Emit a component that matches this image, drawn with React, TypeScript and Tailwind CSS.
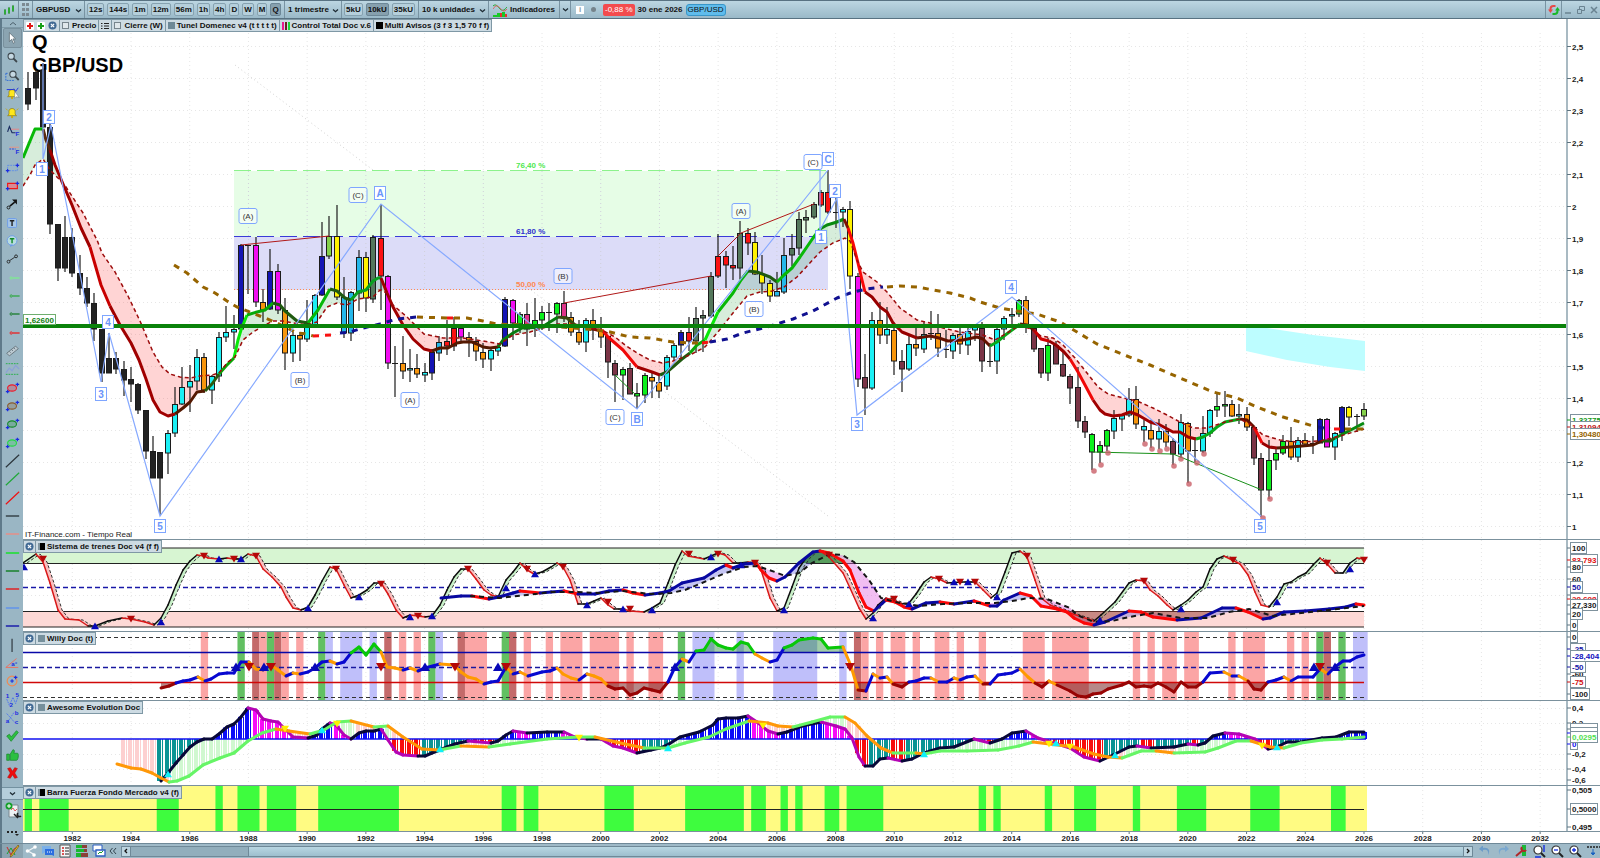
import { Fragment } from "react";
import type { ReactNode } from "react";

type Point = [number, number];

const FIRST_X = 28.3;
const QUARTER = 7.339;
const LAST_X = 1364;
const AXIS_X = 1567;

const quarterX = (i: number) => FIRST_X + i * QUARTER;
const yearX = (year: number) => 72.3 + (year - 1982) * 29.357;

function parse(s: string): Point[] {
  return s
    .trim()
    .split(/\s+/)
    .map((p) => p.split(",").map(Number) as Point);
}

function join(points: Point[]) {
  return points.map((p) => p.join(",")).join(" ");
}

function valueAt(points: Point[], x: number) {
  if (x <= points[0][0]) return points[0][1];
  for (let i = 1; i < points.length; i++) {
    const [x0, y0] = points[i - 1];
    const [x1, y1] = points[i];
    if (x <= x1) return y0 + ((y1 - y0) * (x - x0)) / (x1 - x0 || 1);
  }
  return points[points.length - 1][1];
}

const CANDLE_COLORS: Record<string, string> = {
  k: "#222222",
  C: "#1cf0f5",
  O: "#f7950c",
  B: "#1414b4",
  M: "#f20df2",
  G: "#84d04a",
  Y: "#fff200",
  S: "#25b7ea",
  D: "#54785c",
  R: "#fb1212",
  L: "#0cf01c",
  P: "#e0358a",
  W: "#7b3446",
};

// one candle per quarter: high, body top, body bottom, low, color key
const CANDLES = `
72,88,104,110,k 70,72,88,100,k 63,70,127,128,k 124,127,224,234,k 224,224,268,281,k 216,237,268,272,k
228,237,273,277,k 255,273,288,295,k 277,288,303,307,k 293,303,329,341,k 329,329,373,382,k 333,358,373,373,k
352,358,369,374,k 361,369,380,396,k 367,379,384,402,k 383,384,410,414,k 410,410,451,459,k 436,451,478,478,k
452,452,478,515,k 430,433,453,474,C 387,404,433,437,C 367,387,404,405,C 365,381,387,412,C 349,357,381,390,C
353,357,390,393,O 375,376,390,404,C 332,337,376,382,C 306,332,337,342,C 315,329,332,349,C 244,245,329,330,B
245,245,245,294,k 237,245,302,307,M 289,302,310,322,O 249,271,309,310,B 264,271,310,314,M 298,310,353,370,O
332,335,353,362,C 332,335,339,361,O 300,323,339,342,C 294,295,326,327,C 222,256,295,296,B 216,236,256,259,G
205,236,297,300,Y 277,297,333,338,S 291,292,333,341,S 250,257,293,311,S 252,257,298,312,Y 235,237,299,303,D
204,238,276,310,R 275,276,363,369,M 346,363,363,397,k 336,363,371,379,O 349,368,370,382,C 354,368,374,378,O
363,372,375,382,C 349,352,373,380,B 336,342,353,361,S 320,341,346,355,R 317,328,346,351,R 326,328,337,341,M
332,337,340,357,O 337,341,351,361,O 343,352,359,368,O 347,350,359,371,C 343,347,351,356,C 297,299,346,347,B
299,300,323,340,M 312,314,324,333,L 303,314,329,346,P 298,320,328,337,L 306,312,320,330,L 303,312,313,331,P
302,303,314,333,L 291,303,317,322,P 312,317,332,336,O 320,332,342,345,O 318,320,342,352,C 309,320,330,340,O
317,331,337,348,O 336,336,362,378,W 360,363,375,402,W 367,369,375,400,L 363,368,394,394,W 383,393,396,409,L
373,375,395,403,L 372,377,381,398,O 375,382,391,398,O 355,357,386,390,C 343,345,357,360,C 330,332,345,361,B
317,332,341,351,R 307,318,341,353,D 310,315,318,352,D 272,276,316,318,D 234,256,276,278,R 251,256,265,288,R
246,265,268,280,R 221,233,268,279,D 228,233,243,255,R 232,242,274,275,Y 255,274,283,294,Y 280,283,296,302,Y
272,291,296,296,S 238,255,292,294,S 234,248,255,266,D 212,219,248,255,D 210,217,220,233,D 202,204,217,219,D
190,192,205,207,R 170,192,212,214,R 195,212,212,228,k 207,209,212,227,C 201,209,276,289,Y 273,276,379,387,M
354,377,388,415,W 312,320,388,390,C 302,320,335,344,O 307,329,335,344,C 322,330,361,375,O 350,361,369,392,W
336,344,369,371,C 327,344,348,356,O 322,334,349,353,C 311,333,333,340,k 314,333,348,357,O 330,349,349,358,k
333,335,351,359,C 327,334,344,354,O 328,331,345,355,C 325,326,330,341,C 322,328,361,372,W 343,361,361,367,k
328,329,361,374,C 316,318,329,340,C 308,314,316,325,C 299,300,314,317,L 296,300,325,333,O 325,328,349,352,W
348,348,373,378,W 338,345,373,381,L 341,345,364,364,W 351,364,376,377,W 374,376,388,404,W 367,387,421,428,W
416,421,432,438,W 433,434,452,470,L 441,445,452,463,L 429,430,446,451,L 410,418,431,439,C 414,415,419,431,C
388,399,415,417,C 386,399,424,429,O 420,426,430,442,C 420,430,439,448,O 419,431,439,449,C 424,431,442,447,O
438,441,454,465,W 414,422,454,458,C 422,423,451,483,O 437,450,450,462,k 416,433,451,453,C 409,410,433,437,C
392,406,410,417,L 391,404,406,417,L 400,404,416,417,O 404,414,416,424,C 407,414,427,431,O 426,427,458,465,W
453,458,490,517,W 440,460,490,499,L 448,453,460,470,L 435,441,453,455,L 427,441,457,460,O 437,440,457,462,C
433,440,444,445,O 436,443,443,454,k 418,419,443,443,B 418,419,447,447,M 432,433,447,460,C 406,407,433,441,B
406,407,417,426,Y 414,416,416,432,k 403,409,416,420,G`
  .trim()
  .split(/\s+/)
  .map((c) => {
    const [high, top, bottom, low, key] = c.split(",");
    return { high: +high, top: +top, bottom: +bottom, low: +low, key };
  });

const TREND_RUNS: [string, string][] = [
  ["#08b808", "23,158 35,129 43,129"],
  ["#5a2a10", "43,129 46,140 50,150"],
  ["#a00000", "50,150 55,165 63,184 72,205 81,228 90,247"],
  ["#c80000", "90,247 101,285 110,306"],
  ["#a00000", "110,306 120,325 131,343 139,360 146,379 153,400 160,412 168,416 175,414"],
  ["#541800", "175,414 183,408 190,402 197,392 205,391"],
  ["#2c5a10", "205,391 212,384 219,374"],
  ["#07a807", "219,374 226,366 234,358"],
  ["#08e808", "234,358 238,340 241,330 247,315"],
  ["#08a808", "247,315 257,312 265,310 273,303"],
  ["#1f5a10", "273,303 280,305 285,311 297,321 308,323"],
  ["#08b808", "308,323 318,310 330,289"],
  ["#1f5a10", "330,289 337,291 345,298 351,300"],
  ["#08a020", "351,300 358,292 366,290 373,281 378,278 381,278"],
  ["#a00000", "381,278 387,293 393,307 403,325 413,339 424,349 432,351"],
  ["#541800", "432,351 440,348 448,348 457,343 463,342 472,342 477,344 483,347 490,348 498,347"],
  ["#087a10", "498,347 503,340 513,333 522,328 542,327 550,322 558,317"],
  ["#3a4a10", "558,317 567,318 575,325"],
  ["#801000", "575,325 587,327 597,330 602,330"],
  ["#f00808", "602,330 608,337 623,350 637,367"],
  ["#a00000", "637,367 652,372 660,375"],
  ["#1f5a10", "660,375 667,372 682,359 690,353"],
  ["#08a808", "690,353 697,345 705,340"],
  ["#08e808", "705,340 711,327 718,312"],
  ["#08b808", "718,312 733,293 741,280 748,271"],
  ["#1f5a10", "748,271 757,272 770,277 777,282"],
  ["#08b808", "777,282 784,275 792,268 800,257 813,238 820,229"],
  ["#088a10", "820,229 827,225 837,222 844,219"],
  ["#801000", "844,219 848,228"],
  ["#f80808", "848,228 853,243 858,263 862,280 865,292"],
  ["#980000", "865,292 872,297 880,307 887,312 893,323 902,332 917,338"],
  ["#641000", "917,338 930,336 939,338 948,341 963,340 977,337 983,339 990,346"],
  ["#08a818", "990,346 997,342 1004,336 1012,330 1020,324"],
  ["#541800", "1020,324 1027,325 1034,330"],
  ["#d00000", "1034,330 1041,339 1049,341"],
  ["#980000", "1049,341 1056,345 1064,352 1070,359"],
  ["#f00808", "1070,359 1078,372 1085,385 1093,400"],
  ["#a00000", "1093,400 1100,410 1105,414 1113,416 1122,415 1130,412 1138,415 1150,422 1160,425 1173,432 1180,432 1188,437 1196,439"],
  ["#08a818", "1196,439 1203,437 1210,433 1217,427 1225,422 1240,419"],
  ["#641000", "1240,419 1247,420 1254,427"],
  ["#f00808", "1254,427 1262,443"],
  ["#980000", "1262,443 1269,447 1277,448"],
  ["#541800", "1277,448 1291,447 1313,445 1322,441"],
  ["#1f5a10", "1322,441 1330,441 1335,438"],
  ["#088a10", "1335,438 1343,434 1364,423"],
];

const TREND = TREND_RUNS.flatMap(([, s]) => parse(s));

const SLOW_TREND = parse(`23,186 30,175 35,165 43,159 50,170 58,178 66,187 83,213 97,240 102,253 115,272 128,296 140,321
153,352 162,367 170,374 180,377 190,378 200,376 212,375 219,373 228,362 235,357 243,340 253,332 265,325 273,321 283,321
293,323 307,325 317,322 327,307 337,303 347,305 358,299 373,297 380,290 387,293 393,305 407,317 417,327 424,334 443,338
463,338 483,341 500,344 513,335 530,332 543,328 558,324 570,324 590,328 602,330 615,337 625,345 637,353 650,360 662,363
673,361 690,355 705,347 718,332 733,313 747,296 760,292 772,291 784,287 797,277 808,265 820,252 833,243 845,238 850,241
857,260 863,272 877,282 887,292 900,308 917,320 930,323 943,328 960,332 983,335 995,340 1007,333 1020,325 1033,330
1041,336 1053,338 1063,345 1075,358 1087,373 1098,387 1108,394 1123,398 1137,401 1153,408 1167,415 1180,422 1193,428
1207,428 1225,422 1240,419 1253,426 1263,435 1280,440 1297,442 1320,441 1340,436 1364,429`);

const LONG_AVERAGE: [string, string][] = [
  ["#966400", "174,265 187,273 203,287 215,293 227,301 237,307 265,318 277,323 297,333 307,334 313,336"],
  ["#f81010", "313,336 332,335"],
  ["#101090", "340,333 350,332 363,328 380,324 397,319 417,317"],
  ["#966400", "417,317 447,318"],
  ["#f81010", "447,318 454,318"],
  ["#966400", "454,318 467,318 483,321 497,324 550,326 597,330 610,332 630,337 650,338 673,342 693,343 702,343"],
  ["#f81010", "702,343 710,342"],
  ["#101090", "710,342 727,339 743,333 767,327 793,319 813,311 837,298 853,292 867,289 883,287"],
  ["#966400", "887,287 900,286 917,287 950,293 970,298 980,302 1000,308 1017,311 1037,314 1060,322 1077,332 1097,344 1127,356 1150,365 1180,378 1213,392 1237,398 1257,407 1283,417 1313,426"],
  ["#101090", "1318,427 1330,429"],
  ["#f81010", "1334,429 1341,429"],
  ["#966400", "1345,429 1363,429"],
];

const WAVES = [
  "43,63 43,159 51,125 101,382 109,333 160,516 381,204 637,409 828,170",
  "820,170 820,230 837,198 857,415 1012,297 1262,517",
];

const DIVERGENCES: [string, string][] = [
  ["#b01818", "241,245 329,236"],
  ["#b01818", "564,303 711,276"],
  ["#b01818", "718,256 741,233 814,204"],
  ["#189018", "615,375 637,396"],
  ["#189018", "1093,452 1173,454 1262,490"],
];

const WAVE_LABELS: [string, number, number][] = [
  ["2", 49, 117], ["1", 42, 169], ["4", 108, 322], ["3", 101, 394], ["5", 160, 526],
  ["A", 380, 193], ["C", 828, 159], ["2", 835, 191], ["1", 821, 237], ["B", 637, 419],
  ["3", 857, 424], ["4", 1011, 287], ["5", 1260, 526],
];

const SUBWAVE_LABELS: [string, number, number][] = [
  ["(A)", 248, 216], ["(C)", 358, 195], ["(B)", 300, 380], ["(A)", 410, 400], ["(B)", 563, 276],
  ["(C)", 615, 417], ["(A)", 741, 211], ["(B)", 754, 309], ["(C)", 813, 162],
];

const DOTS = parse(`1094,471 1101,465 1108,453 1145,444 1152,449 1160,451 1167,449 1174,466 1181,459 1189,484 1197,463
1204,454 1270,499 1263,518`);

const TRAIN_FAST = parse(`23,563 36,554 43,562 50,583 58,610 65,619 79,620 88,626 95,626 108,621 122,618 131,619 145,622
154,625 161,618 168,605 176,585 183,570 190,561 197,555 204,556 208,558 219,559 227,558 234,559 241,559 248,554 256,556
263,569 272,577 281,587 286,597 293,608 301,610 308,607 315,595 322,581 330,567 336,569 344,585 351,598 359,595 367,590
374,583 381,583 388,594 396,610 403,618 410,615 418,616 425,617 432,616 440,605 447,590 454,577 461,569 468,569 476,579
484,590 491,595 498,597 506,580 513,572 520,563 527,570 534,574 542,572 551,567 557,563 563,567 570,580 578,604 587,604
594,601 601,598 608,605 614,609 623,609 630,611 644,612 652,608 660,603 668,583 675,565 682,551 688,556 704,559 711,556
718,553 725,555 733,563 740,563 748,562 755,563 761,570 770,598 777,611 784,608 792,587 799,568 806,558 813,552 820,551
829,557 843,573 850,588 859,608 866,619 873,613 878,605 886,598 895,601 902,604 909,603 916,594 924,582 931,577 939,579
947,583 961,582 975,582 983,590 991,598 997,593 1005,572 1012,553 1020,551 1027,557 1035,580 1041,598 1050,605 1070,613
1094,621 1101,615 1115,602 1129,583 1136,580 1144,581 1150,590 1158,596 1167,605 1173,610 1181,605 1188,600 1196,592
1203,587 1210,569 1217,559 1224,556 1232,560 1240,564 1248,575 1255,592 1261,605 1269,607 1277,597 1284,584 1291,582
1298,577 1306,573 1313,565 1320,558 1328,565 1335,573 1343,573 1350,563 1357,558 1364,559`);

const TRAIN_SLOW = parse(`441,598 461,596 472,596 489,599 499,597 513,593 520,591 540,593 551,592 564,591 578,594 595,594
609,591 623,590 633,593 645,595 660,593 669,591 682,583 704,578 716,570 726,565 733,568 744,564 756,563 761,570 769,578
777,581 785,577 799,563 813,552 820,551 829,553 843,561 850,570 859,593 866,607 874,611 886,600 895,602 904,607 912,609
926,603 940,602 954,604 974,601 990,606 997,606 1004,600 1020,593 1031,596 1041,606 1057,609 1067,612 1074,618 1084,623
1094,625 1105,622 1129,611 1141,612 1153,617 1177,620 1201,618 1222,608 1236,608 1248,612 1263,619 1270,618 1284,612
1305,611 1329,609 1346,607 1356,604 1364,605`);

const TRAIN_SIGNAL = parse(`470,596 499,598 527,595 551,592 575,592 599,593 623,591 651,594 671,593 685,590 702,583
723,574 744,567 757,566 775,572 785,576 799,573 812,563 830,554 842,555 854,562 869,580 881,598 895,602 919,606 943,604
967,603 995,603 1012,601 1029,598 1047,599 1070,608 1077,615 1094,622 1112,621 1129,617 1153,613 1181,618 1208,618
1229,612 1249,609 1273,616 1301,613 1329,610 1364,606`);

const TRAIN_DOWN = parse(`43,559 204,556 234,559 256,556 336,569 381,584 131,619 418,616 468,569 527,569 563,567 608,602
630,609 689,554 718,554 755,563 829,555 894,599 939,579 960,582 975,582 1027,556 1144,581 1233,560 1327,563 1364,560`);

const TRAIN_UP = parse(`24,567 95,626 161,622 219,559 241,559 308,608 359,597 410,617 432,616 506,588 535,574 587,605
623,609 652,610 711,557 741,565 784,610 873,618 909,604 954,582 968,582 997,597 1100,620 1181,609 1277,602 1350,569`);

const WILLY = parse(`161,688 169,686 176,683 183,681 190,680 198,677 205,681 211,679 219,674 227,673 234,673 241,662
249,662 256,669 263,670 271,665 278,670 286,676 293,673 300,674 308,672 315,668 322,662 330,661 337,664 344,662 351,653
359,647 366,655 374,644 381,652 387,667 395,668 403,670 410,668 418,671 425,668 440,664 454,665 461,672 468,677 476,679
484,684 491,682 498,681 506,667 513,674 520,672 528,676 542,672 550,671 557,668 563,674 571,678 579,680 587,674 594,676
601,679 608,686 615,689 623,688 630,695 637,693 644,688 652,690 660,692 668,682 675,667 682,659 689,662 696,651 704,650
711,639 718,645 726,648 733,649 741,642 748,644 755,654 762,658 770,662 777,660 784,648 792,645 799,640 813,638 821,639
828,648 843,647 851,666 858,690 866,691 873,674 880,678 887,677 893,684 902,687 909,682 916,681 924,678 931,678 939,682
947,682 954,678 960,680 967,677 975,676 983,684 990,684 998,675 1005,674 1012,673 1020,669 1028,677 1035,683 1042,687
1049,681 1057,685 1070,691 1078,696 1086,697 1093,694 1101,693 1108,689 1122,685 1129,682 1136,687 1144,686 1151,687
1158,683 1166,687 1174,692 1181,682 1188,687 1196,687 1203,682 1210,673 1224,672 1232,676 1239,676 1248,681 1254,689
1261,690 1268,682 1276,680 1284,677 1291,681 1298,677 1313,677 1320,669 1328,674 1335,667 1343,661 1350,661 1357,657
1364,655`);

// first quarter, last quarter, color
const PINK = "#fba5a5";
const GREEN = "#62c062";
const MAROON = "#c46a6a";
const LILAC = "#bfbffa";
const WILLY_BARS: [number, number, string][] = [
  [24, 24, PINK], [29, 29, GREEN], [31, 31, MAROON], [32, 32, PINK], [33, 33, GREEN], [34, 34, MAROON],
  [35, 35, PINK], [37, 37, PINK], [40, 40, GREEN], [41, 41, LILAC], [43, 45, LILAC], [47, 47, LILAC],
  [49, 49, MAROON], [51, 51, PINK], [53, 53, PINK], [55, 55, GREEN], [56, 56, LILAC], [59, 59, MAROON],
  [60, 62, PINK], [65, 65, GREEN], [66, 66, MAROON], [68, 68, PINK], [71, 71, PINK], [73, 75, PINK],
  [77, 80, PINK], [82, 82, PINK], [85, 86, PINK], [89, 89, GREEN], [91, 93, LILAC], [97, 97, LILAC],
  [102, 107, LILAC], [111, 111, LILAC], [113, 113, MAROON], [114, 114, PINK], [116, 116, PINK],
  [118, 119, PINK], [121, 121, PINK], [124, 125, PINK], [127, 127, PINK], [130, 130, PINK],
  [136, 138, PINK], [140, 144, PINK], [151, 151, PINK], [153, 153, PINK], [155, 156, PINK],
  [158, 159, PINK], [164, 164, PINK], [166, 168, PINK], [172, 172, PINK], [174, 174, PINK],
  [176, 176, GREEN], [177, 177, MAROON], [179, 179, GREEN], [181, 182, LILAC],
];

const AWESOME_FAST = parse(`161,781 168,773 176,763 183,755 190,747 197,742 204,739 212,739 219,734 227,727 234,724
241,717 248,708 256,710 263,719 271,721 278,722 286,730 293,737 308,738 317,735 322,729 330,723 336,725 344,735 351,739
359,733 366,731 374,731 381,729 388,740 396,752 403,755 418,756 425,756 432,753 440,750 447,747 455,744 468,741 491,743
498,741 506,735 513,731 527,733 547,732 564,732 575,737 587,739 601,739 613,746 623,748 637,753 651,750 660,748 669,744
680,737 699,732 713,725 718,719 726,718 738,718 748,716 757,722 768,731 778,734 787,732 802,726 821,722 836,726 845,729
852,738 859,757 865,766 873,766 880,759 888,758 902,761 912,759 924,753 940,748 954,747 974,739 990,743 1002,739
1012,733 1026,731 1038,738 1070,748 1084,757 1100,761 1113,755 1129,747 1137,746 1151,748 1174,747 1188,744 1198,745
1205,743 1213,736 1225,733 1239,734 1255,739 1268,749 1277,747 1287,742 1301,742 1322,738 1336,737 1349,732 1364,732`);

const AWESOME_SLOW = parse(`117,764 131,768 141,769 152,773 161,778 169,782 177,781 189,776 203,765 220,758 234,753
248,741 262,733 276,729 289,731 310,734 324,730 337,722 351,721 374,727 388,726 403,737 422,749 439,750 461,746 489,747
510,744 547,739 578,737 595,737 616,742 644,748 668,748 685,743 709,737 726,729 749,721 768,723 778,726 793,727 812,722
830,717 845,717 855,723 867,736 881,748 893,753 916,753 924,754 940,751 967,751 998,750 1019,746 1033,742 1074,747
1094,754 1108,757 1122,758 1141,751 1156,751 1174,753 1205,752 1218,748 1236,741 1251,741 1270,747 1284,748 1301,743
1322,740 1342,739 1364,737`);

const AWESOME_UP = parse("168,774 322,730 440,749 668,748 924,754 1056,743 1115,755 1277,747");
const AWESOME_DOWN = parse("285,729 337,724 579,738 763,726 1049,744 1070,747 1262,746");

const STRENGTH_BARS: [number, number][] = [
  [0, 0], [2, 5], [18, 20], [26, 26], [29, 31], [33, 36], [40, 50], [65, 66], [68, 69], [79, 82],
  [90, 97], [99, 100], [103, 103], [105, 105], [109, 110], [112, 116], [130, 130], [132, 132],
  [139, 139], [143, 145], [151, 151], [157, 160], [167, 170], [178, 179],
];

const YEARS = Array.from({ length: 26 }, (_, i) => 1982 + i * 2);

/* ---------- chart primitives ---------- */

function Grid({ top, bottom, rows = [] }: { top: number; bottom: number; rows?: number[] }) {
  return (
    <g stroke="#e6e6e6" strokeDasharray="1 3">
      {YEARS.map((y) => (
        <line key={y} x1={yearX(y)} x2={yearX(y)} y1={top} y2={bottom} />
      ))}
      {rows.map((y) => (
        <line key={y} x1={23} x2={AXIS_X} y1={y} y2={y} />
      ))}
    </g>
  );
}

function Runs({ runs, width, dash }: { runs: [string, string][]; width: number; dash?: string }) {
  return (
    <>
      {runs.map(([color, s]) => (
        <polyline key={s} points={s} fill="none" stroke={color} strokeWidth={width} strokeDasharray={dash} strokeLinejoin="round" />
      ))}
    </>
  );
}

function ColoredLine({ points, width, color }: { points: Point[]; width: number; color: (a: Point, b: Point) => string }) {
  return (
    <g strokeWidth={width} strokeLinecap="round">
      {points.slice(1).map((b, i) => {
        const a = points[i];
        return <line key={i} x1={a[0]} y1={a[1]} x2={b[0]} y2={b[1]} stroke={color(a, b)} />;
      })}
    </g>
  );
}

// fills the space between two lines, with one color where a is on top and another where b is
function Cloud({ a, b, above, below }: { a: Point[]; b: Point[]; above: string; below: string }) {
  const from = Math.max(a[0][0], b[0][0]);
  const to = Math.min(a[a.length - 1][0], b[b.length - 1][0]);
  const areas: { up: boolean; a: Point[]; b: Point[] }[] = [];
  for (let x = from; x <= to; x += 1) {
    const ya = valueAt(a, x);
    const yb = valueAt(b, x);
    const up = ya < yb;
    let area = areas[areas.length - 1];
    if (!area || area.up !== up) {
      area = { up, a: [], b: [] };
      areas.push(area);
    }
    area.a.push([x, ya]);
    area.b.push([x, yb]);
  }
  return (
    <>
      {areas.map((r, i) => (
        <polygon key={i} points={join([...r.a, ...r.b.reverse()])} fill={r.up ? above : below} />
      ))}
    </>
  );
}

function Beyond({ points, level, side, fill }: { points: Point[]; level: number; side: "over" | "under"; fill: string }) {
  const dense: Point[] = [];
  for (let x = points[0][0]; x <= LAST_X; x += 1) {
    const y = valueAt(points, x);
    dense.push([x, side === "over" ? Math.min(y, level) : Math.max(y, level)]);
  }
  return <polygon points={join([[dense[0][0], level], ...dense, [LAST_X, level]])} fill={fill} />;
}

function Arrow({ x, y, size, up, fill }: { x: number; y: number; size: number; up?: boolean; fill: string }) {
  const d = up ? -size : size;
  return <polygon points={`${x - size},${y - d * 0.8} ${x + size},${y - d * 0.8} ${x},${y + d * 0.9}`} fill={fill} />;
}

function textWidth(s: string) {
  return [...s].reduce((w, c) => w + (c === "," ? 2.2 : c === "-" ? 2.7 : 4.45), 0);
}

type Tick = { y: number; text: string; color?: string; boxed?: boolean };

function Axis({ top, bottom, ticks }: { top: number; bottom: number; ticks: Tick[] }) {
  return (
    <g>
      <rect x={AXIS_X} y={top} width={33} height={bottom - top} fill="#ffffff" />
      <rect x={AXIS_X - 1} y={top} width={2} height={bottom - top} fill="#a9bac3" />
      {ticks.map(({ y, text, color = "#1a1a1a", boxed }) => (
        <Fragment key={text}>
          <line x1={1567} x2={1571} y1={y} y2={y} stroke={color === "#1a1a1a" ? "#5f7480" : color} />
          {boxed && (
            <rect x={1570.5} y={y - 5.5} width={Math.round(textWidth(text)) + 3} height={11} fill="#ffffff" stroke="#7f929d" />
          )}
          <text x={1572} y={y + 3} fill={color} className="text-[8px] font-bold">
            {text}
          </text>
        </Fragment>
      ))}
    </g>
  );
}

type Box = { top: number; bottom: number };

function Panel({ box, name, first, children, tab }: { box: Box; name: string; first?: boolean; children: ReactNode; tab?: ReactNode }) {
  return (
    <section
      aria-label={name}
      className={first ? "relative min-h-0 overflow-hidden" : "relative min-h-0 overflow-hidden border-t border-[#7b919d]"}
    >
      <svg
        className="block h-full w-full"
        viewBox={`23 ${box.top} 1577 ${box.bottom - box.top}`}
        preserveAspectRatio="xMinYMid meet"
      >
        {children}
      </svg>
      {tab && <div className="absolute left-0 top-0 flex h-[13px] border border-[#7f98a5] bg-[#cddbe3]">{tab}</div>}
    </section>
  );
}

/* ---------- panels ---------- */

function PriceChart() {
  const rows = Array.from({ length: 16 }, (_, i) => 46.5 + i * 32);
  const ticks: Tick[] = rows
    .map((y, i) => ({ y, text: ((25 - i) / 10).toString().replace(".", ",") }))
    .filter((t) => t.text !== "1,3");
  return (
    <Panel
      box={{ top: 19, bottom: 539 }}
      name="GBP/USD"
      first
      tab={
        <>
          <div className="flex items-center gap-[3px] px-0.5">
            <PlusBadge color="#e01818" label="Vender" />
            <PlusBadge color="#18a018" label="Comprar" />
            <CloseButton label="Cerrar Precio" />
          </div>
          <TabCell>
            <label className="flex items-center gap-[3px]">
              <input type="checkbox" className="size-[7px] appearance-none border border-[#77858d] bg-[#dfe7eb]" />
              Precio
            </label>
          </TabCell>
          <TabCell>
            <button aria-label="Lista" className="flex">
              <svg viewBox="0 0 8 8" className="size-2" stroke="#222">
                <path d="M0 1.5h1.500M3 1.500h5M0 4h1.500M3 4h5M0 6.500h1.500M3 6.500h5" />
              </svg>
            </button>
          </TabCell>
          <TabCell>
            <label className="flex items-center gap-[3px]">
              <input type="checkbox" className="size-[7px] appearance-none border border-[#77858d] bg-[#dfe7eb]" />
              Cierre (W)
            </label>
          </TabCell>
          <TabCell>
            <span className="size-[7px] bg-[#6d8896]" />
            Tunel Domenec v4 (t t t t t)
          </TabCell>
          <TabCell>
            <span className="flex h-2 gap-px">
              <i className="w-0.5 bg-[#e81890]" />
              <i className="w-0.5 bg-[#6a2020]" />
              <i className="w-0.5 bg-[#18d838]" />
            </span>
            Control Total Doc v.6
          </TabCell>
          <TabCell>
            <span className="size-[7px] bg-black" />
            Multi Avisos (3 f 3 1,5 70 f f)
          </TabCell>
        </>
      }
    >
      <Grid top={33} bottom={539} rows={rows} />
      <line x1={235} y1={65} x2={828} y2={516} stroke="#d2d2d2" strokeDasharray="1 3" />
      <text x={32} y={49} className="text-[20px] font-bold">Q</text>
      <text x={32} y={72} className="text-[20px] font-bold">GBP/USD</text>

      <rect x={234} y={171} width={594} height={66} fill="#e6fde6" />
      <rect x={234} y={237} width={594} height={53} fill="#dcdcf8" />
      <g stroke="#d0d0da" strokeDasharray="1 3">
        {YEARS.filter((y) => y > 1986 && y < 2008).map((y) => (
          <line key={y} x1={yearX(y)} x2={yearX(y)} y1={171} y2={290} />
        ))}
      </g>
      <line x1={234} x2={828} y1={170.500} y2={170.500} stroke="#8cf28c" strokeDasharray="17 6" />
      <line x1={234} x2={828} y1={236.500} y2={236.500} stroke="#3a3ad8" strokeDasharray="17 6" />
      <line x1={234} x2={828} y1={289.500} y2={289.500} stroke="#ff8a50" strokeDasharray="1 2" />
      <g className="text-[8px] font-bold">
        <text x={516} y={168} fill="#50e850">76,40 %</text>
        <text x={516} y={234} fill="#3030d0">61,80 %</text>
        <text x={516} y={287} fill="#ff8850">50,00 %</text>
      </g>

      <polygon points="1246,325 1280,330 1313,335 1365,341 1365,371 1330,367 1287,360 1246,351" fill="#bdfdff" />
      <Cloud a={TREND} b={SLOW_TREND} above="rgba(20,150,40,0.17)" below="rgba(255,60,60,0.22)" />

      {CANDLES.map((c, i) => {
        const x = Math.round(quarterX(i));
        return (
          <g key={i}>
            <line x1={x} x2={x} y1={c.high} y2={c.low} stroke="#1c1c1c" strokeWidth={1.200} />
            {c.bottom - c.top < 2 ? (
              <line x1={x - 3} x2={x + 3} y1={c.top + 0.5} y2={c.top + 0.5} stroke="#1c1c1c" />
            ) : (
              <rect x={x - 2.500} y={c.top + 0.500} width={5} height={c.bottom - c.top - 0.5} fill={CANDLE_COLORS[c.key]} stroke="#1c1c1c" />
            )}
          </g>
        );
      })}

      <Runs runs={TREND_RUNS} width={3} />
      <polyline points={join(SLOW_TREND)} fill="none" stroke="#9c0c0c" strokeWidth={1.500} strokeDasharray="4 3" />
      <Runs runs={LONG_AVERAGE} width={3} dash="6 6" />
      <Runs runs={DIVERGENCES} width={1} />
      {WAVES.map((w) => (
        <polyline key={w} points={w} fill="none" stroke="#86a9ff" strokeWidth={1.200} />
      ))}
      {DOTS.map(([x, y]) => (
        <circle key={x} cx={x} cy={y} r={2.800} fill="#c95f68" fillOpacity={0.800} />
      ))}

      <rect x={23} y={324} width={1544} height={4} fill="#0a820a" />
      <rect x={23.500} y={314.500} width={32} height={10} fill="#ffffff" stroke="#6fae6f" />
      <text x={25} y={322.500} fill="#108010" className="text-[8px] font-bold">1,62600</text>

      {WAVE_LABELS.map(([t, x, y]) => (
        <g key={`${t}${x}`}>
          <rect x={x - 5.500} y={y - 6.500} width={11} height={13} fill="#ffffff" stroke="#7fa6ff" />
          <text x={x} y={y + 4} textAnchor="middle" fill="#6a94fa" className="text-[10px] font-bold">{t}</text>
        </g>
      ))}
      {SUBWAVE_LABELS.map(([t, x, y]) => (
        <g key={`${t}${x}`}>
          <rect x={x - 9} y={y - 7.500} width={18} height={15} rx={2} fill="#ffffff" fillOpacity={0.500} stroke="#7fa6ff" />
          <text x={x} y={y + 3} textAnchor="middle" fill="#333333" className="text-[8px] font-normal">{t}</text>
        </g>
      ))}

      <text x={25} y={537} fill="#222222" className="text-[8px] font-normal">IT-Finance.com - Tiempo Real</text>
      <Axis
        top={19}
        bottom={539}
        ticks={[
          ...ticks,
          { y: 420, text: "1,32775", color: "#109818", boxed: true },
          { y: 427, text: "1,31094", color: "#c01818", boxed: true },
          { y: 434, text: "1,30480", color: "#966400", boxed: true },
        ]}
      />
    </Panel>
  );
}

function TrainsChart() {
  const lagged = TRAIN_FAST.map(([x, y]) => [x + 4, y] as Point);
  return (
    <Panel box={{ top: 540, bottom: 631 }} name="Sistema de trenes" tab={<IndicatorTab name="Sistema de trenes Doc v4 (f f)" swatch="split" />}>
      <Grid top={540} bottom={631} rows={[579.500, 595.500]} />
      <rect x={23} y={548} width={1341} height={16} fill="#d7f5d2" />
      <rect x={23} y={611} width={1341} height={16} fill="#fdd9d6" />
      {[548, 563.500, 611.500, 627].map((y) => (
        <line key={y} x1={23} x2={LAST_X} y1={y} y2={y} stroke="#222222" />
      ))}
      <line x1={23} x2={LAST_X} y1={587.500} y2={587.500} stroke="#1818a8" strokeWidth={1.500} strokeDasharray="5 3" />
      <Cloud a={TRAIN_FAST} b={lagged} above="#c8f0c8" below="#f8c0c0" />
      <Cloud a={TRAIN_SLOW} b={TRAIN_SIGNAL} above="rgba(90,90,220,0.35)" below="rgba(225,100,225,0.42)" />
      <Beyond points={TRAIN_SLOW} level={611} side="under" fill="rgba(150,60,50,0.5)" />
      <Beyond points={TRAIN_SLOW} level={563} side="over" fill="rgba(20,110,30,0.65)" />
      <polyline points={join(lagged)} fill="none" stroke="#333333" strokeDasharray="3 2" />
      <ColoredLine points={TRAIN_FAST} width={1.500} color={(a, b) => (b[1] > a[1] ? "#d81818" : "#0c0c0c")} />
      <ColoredLine points={TRAIN_SLOW} width={3} color={(a, b) => (b[1] > a[1] ? "#fb0808" : "#0808a0")} />
      <polyline points={join(TRAIN_SIGNAL)} fill="none" stroke="#161616" strokeWidth={2} strokeDasharray="5 4" />
      {TRAIN_DOWN.map(([x, y]) => (
        <Arrow key={x} x={x} y={y} size={4} fill="#b40808" />
      ))}
      {TRAIN_UP.map(([x, y]) => (
        <Arrow key={x} x={x} y={y} size={4} up fill="#0808b8" />
      ))}
      <Axis
        top={540}
        bottom={631}
        ticks={[
          { y: 548, text: "100", boxed: true },
          { y: 560, text: "83,793", color: "#e01010", boxed: true },
          { y: 567, text: "80", boxed: true },
          { y: 579, text: "60" },
          { y: 595, text: "40" },
          { y: 587, text: "50", color: "#1818a8", boxed: true },
          { y: 599, text: "29,698", color: "#e01010", boxed: true },
          { y: 605, text: "27,330", boxed: true },
          { y: 614, text: "20", boxed: true },
          { y: 625, text: "0", boxed: true },
        ]}
      />
    </Panel>
  );
}

function willyColor(a: Point, b: Point) {
  const mid = (a[1] + b[1]) / 2;
  if (mid > 683) return "#980404";
  if (mid < 652) return "#08c808";
  return b[1] > a[1] ? "#ff9a00" : "#0808d0";
}

function WillyChart() {
  return (
    <Panel box={{ top: 632, bottom: 700 }} name="Willy" tab={<IndicatorTab name="Willy Doc (t)" swatch="plain" />}>
      <Grid top={632} bottom={700} />
      {WILLY_BARS.map(([from, to, color]) => (
        <rect key={from} x={quarterX(from - 0.5)} y={632} width={(to - from + 1) * QUARTER} height={68} fill={color} />
      ))}
      {[637.500, 697.500].map((y) => (
        <line key={y} x1={23} x2={LAST_X} y1={y} y2={y} stroke="#333333" strokeDasharray="4 3" />
      ))}
      <Beyond points={WILLY} level={682.500} side="under" fill="rgba(110,20,20,0.5)" />
      <Beyond points={WILLY} level={652.500} side="over" fill="rgba(20,130,40,0.4)" />
      <line x1={23} x2={LAST_X} y1={652.500} y2={652.500} stroke="#0808a8" strokeWidth={1.500} />
      <line x1={23} x2={LAST_X} y1={667.500} y2={667.500} stroke="#1818a0" strokeWidth={1.500} strokeDasharray="5 3" />
      <line x1={23} x2={LAST_X} y1={682.500} y2={682.500} stroke="#d00808" strokeWidth={1.500} />
      <ColoredLine points={WILLY} width={3} color={willyColor} />
      {[249, 271, 381, 455, 506, 850, 1320].map((x) => (
        <Arrow key={x} x={x} y={667} size={5} fill="#b40808" />
      ))}
      {[236, 264, 315, 425, 498, 675, 1314, 1335].map((x) => (
        <Arrow key={x} x={x} y={667} size={5} up fill="#0808b8" />
      ))}
      <Axis
        top={632}
        bottom={700}
        ticks={[
          { y: 637, text: "0", boxed: true },
          { y: 649, text: "-25", color: "#1818a8", boxed: true },
          { y: 656, text: "-28,404", color: "#1010c0", boxed: true },
          { y: 674, text: "-60" },
          { y: 667, text: "-50", color: "#1818a8", boxed: true },
          { y: 682, text: "-75", color: "#d01010", boxed: true },
          { y: 694, text: "-100", boxed: true },
        ]}
      />
    </Panel>
  );
}

function AwesomeChart() {
  const zero = 739;
  const bars = (points: Point[], start: number, rise: [string, string], fall: [string, string]) =>
    Array.from({ length: 183 - start }, (_, k) => {
      const x = quarterX(k + start);
      const y = valueAt(points, x);
      const rising = y <= valueAt(points, x - 6);
      const side = y < zero ? 0 : 1;
      return { x: Math.round(x), y, color: rising ? rise[side] : fall[side] };
    });
  const slow = bars(AWESOME_SLOW, 13, ["#d0f8d0", "#d0f8d0"], ["#fdd0d0", "#fdd0d0"]);
  const fast = bars(AWESOME_FAST, 18, ["#0c0cf8", "#0a9494"], ["#f80cf8", "#f80c0c"]);
  return (
    <Panel box={{ top: 701, bottom: 785 }} name="Awesome Evolution" tab={<IndicatorTab name="Awesome Evolution Doc" swatch="plain" />}>
      <Grid top={701} bottom={785} rows={[708.500, 723.500, 754.500, 769.500]} />
      {[...slow, ...fast].map((b, i) => (
        <g key={i}>
          <rect x={b.x - 3.500} y={Math.min(b.y, zero)} width={7} height={Math.abs(zero - b.y)} fill="#ffffff" />
          <rect x={b.x - 3} y={Math.min(b.y, zero)} width={4} height={Math.abs(zero - b.y)} fill={b.color} />
          <rect x={b.x + 2} y={Math.min(b.y, zero)} width={1} height={Math.abs(zero - b.y)} fill={b.color} />
        </g>
      ))}
      <line x1={23} x2={1366} y1={zero} y2={zero} stroke="#1010f0" strokeWidth={1.500} />
      <rect x={1361} y={732} width={5} height={7} fill="#1010f0" />
      <ColoredLine points={AWESOME_FAST} width={3} color={(a, b) => (b[1] > a[1] ? "#b404b4" : "#080838")} />
      <ColoredLine points={AWESOME_SLOW} width={3} color={(a, b) => (b[1] > a[1] ? "#ff9808" : "#66f566")} />
      {AWESOME_UP.map(([x, y]) => (
        <Arrow key={x} x={x} y={y} size={4} up fill="#10f0f8" />
      ))}
      {AWESOME_DOWN.map(([x, y]) => (
        <Arrow key={x} x={x} y={y} size={4} fill="#fff000" />
      ))}
      <Axis
        top={701}
        bottom={785}
        ticks={[
          { y: 708, text: "0,4" },
          { y: 723, text: "0,2" },
          { y: 729, text: "0,0789", boxed: true },
          { y: 733, text: "0,0781", color: "#1010f0", boxed: true },
          { y: 744, text: "0", color: "#1010f0", boxed: true },
          { y: 737, text: "0,0295", color: "#50e050", boxed: true },
          { y: 754, text: "-0,2" },
          { y: 769, text: "-0,4" },
          { y: 780, text: "-0,6" },
        ]}
      />
    </Panel>
  );
}

function StrengthChart() {
  return (
    <Panel box={{ top: 786, bottom: 831 }} name="Barra Fuerza" tab={<IndicatorTab name="Barra Fuerza Fondo Mercado v4 (f)" swatch="split" />}>
      <Grid top={786} bottom={831} />
      <rect x={23} y={786} width={1344} height={45} fill="#fffb82" />
      {STRENGTH_BARS.map(([from, to]) => (
        <rect key={from} x={quarterX(from - 0.5)} y={786} width={(to - from + 1) * QUARTER} height={45} fill="#3efc3e" />
      ))}
      <line x1={23} x2={LAST_X} y1={809.500} y2={809.500} stroke="#222222" />
      <Axis
        top={786}
        bottom={831}
        ticks={[
          { y: 790, text: "0,505" },
          { y: 809, text: "0,5000", boxed: true },
          { y: 827, text: "0,495" },
        ]}
      />
    </Panel>
  );
}

function TimeAxis() {
  return (
    <Panel box={{ top: 832, bottom: 843 }} name="Tiempo">
      {YEARS.filter((y) => y < 2034).map((y) => (
        <g key={y}>
          <line x1={yearX(y)} x2={yearX(y)} y1={831} y2={834} stroke="#5f7480" />
          <text x={yearX(y)} y={841} textAnchor="middle" fill="#1a1a1a" className="text-[8px] font-bold">
            {y}
          </text>
        </g>
      ))}
    </Panel>
  );
}

/* ---------- panel headers ---------- */

function TabCell({ children }: { children: ReactNode }) {
  return <div className="flex items-center gap-0.5 whitespace-nowrap border-l border-[#7f98a5] px-0.5">{children}</div>;
}

function PlusBadge({ color, label }: { color: string; label: string }) {
  return (
    <button aria-label={label} className="flex size-2 items-center justify-center rounded-[1px] bg-white">
      <svg viewBox="0 0 8 8" className="size-2" stroke={color} strokeWidth={2}>
        <path d="M4 1v6M1 4h6" />
      </svg>
    </button>
  );
}

function CloseButton({ label }: { label: string }) {
  return (
    <button aria-label={label} className="flex">
      <svg viewBox="0 0 10 10" className="size-[9px]">
        <circle cx="5" cy="5" r="4.500" fill="#416a94" />
        <path d="M3.200 3.200l3.600 3.600M6.800 3.200L3.200 6.800" stroke="#fff" strokeWidth="1.300" />
      </svg>
    </button>
  );
}

function IndicatorTab({ name, swatch }: { name: string; swatch: "split" | "plain" }) {
  return (
    <>
      <div className="flex items-center px-px">
        <CloseButton label={`Cerrar ${name}`} />
      </div>
      <TabCell>
        {swatch === "split" ? (
          <span className="flex h-[7px]">
            <i className="w-0.5 bg-[#8095a0]" />
            <i className="w-[5px] bg-black" />
          </span>
        ) : (
          <span className="size-[7px] bg-[#76909c]" />
        )}
        {name}
      </TabCell>
    </>
  );
}

/* ---------- top bar ---------- */

const PERIODS = ["12s", "144s", "1m", "12m", "56m", "1h", "4h", "D", "W", "M", "Q"];
const UNITS = ["5kU", "10kU", "35kU"];

function Chip({ text, active }: { text: string; active?: boolean }) {
  return (
    <button
      aria-pressed={active}
      className={
        active
          ? "h-[13px] rounded-[2px] border border-[#6c8797] bg-[#86a0ae] px-px leading-[11px]"
          : "h-[13px] rounded-[2px] border border-[#86a2b0] bg-[#b5cfdb] px-px leading-[11px]"
      }
    >
      {text}
    </button>
  );
}

function Drop({ label, value, width }: { label: string; value: string; width: string }) {
  return (
    <div className={`relative flex h-full items-center border-l border-[#7893a2] ${width}`}>
      <select aria-label={label} className="h-full w-full appearance-none bg-transparent pl-[3px] text-[8px] font-bold">
        <option>{value}</option>
      </select>
      <Chevron className="pointer-events-none absolute right-0.5 top-1.5" />
    </div>
  );
}

function Chevron({ className }: { className?: string }) {
  return (
    <svg viewBox="0 0 7 7" className={`size-[7px] ${className ?? ""}`} fill="none" stroke="#1c2a33" strokeWidth={1.300}>
      <path d="M1 2.500l2.500 2.200L6 2.500" />
    </svg>
  );
}

function TopBar() {
  return (
    <header className="flex h-[19px] shrink-0 items-center border-y border-[#587282] bg-linear-to-b from-[#bcd6e2] to-[#9ab9c8]">
      <button aria-label="Gráfico" className="flex w-[18px] justify-center">
        <svg viewBox="0 0 12 12" className="size-3">
          <path d="M2 5v6M6 3v7M10 1v7" stroke="#237a23" />
          <path d="M1 6h2v4H1zM5 4h2v5H5zM9 2h2v5H9z" fill="#2fa83a" />
        </svg>
      </button>
      <div className="flex h-full w-[14px] items-center justify-center border-l border-[#7893a2]">
        <svg viewBox="0 0 7 13" className="h-[13px] w-[7px]" fill="#7c8a92">
          <path d="M0 0h3v3H0zM4 0h3v3H4zM0 5h3v3H0zM4 5h3v3H4zM0 10h3v3H0zM4 10h3v3H4z" />
        </svg>
      </div>
      <Drop label="Instrumento" value="GBPUSD" width="w-[52px]" />
      <div className="flex h-full w-[200px] items-center gap-[3px] border-l border-[#7893a2] pl-0.5">
        {PERIODS.map((p) => (
          <Chip key={p} text={p} active={p === "Q"} />
        ))}
      </div>
      <Drop label="Periodo" value="1 trimestre" width="w-[57px]" />
      <div className="flex h-full w-[77px] items-center gap-[3px] border-l border-[#7893a2] pl-0.5">
        {UNITS.map((u) => (
          <Chip key={u} text={u} active={u === "10kU"} />
        ))}
      </div>
      <Drop label="Unidades" value="10 k unidades" width="w-[70px]" />
      <button className="flex h-full w-[71px] items-center gap-[3px] border-l border-[#7893a2] pl-1 whitespace-nowrap">
        <svg viewBox="0 0 14 14" className="size-3.5 shrink-0" fill="none">
          <path d="M0 12h4v2H0zM4 10h3v4H4zM9 9h3v5H9z" fill="#18c828" />
          <path d="M7 10h2v4H7zM12 11h2v3h-2z" fill="#e83030" />
          <path d="M0 3c3-3 5 1 7 3s4 2 7-2" stroke="#28a838" />
          <path d="M0 6c3-5 5-3 7-1s4 5 7 1" stroke="#e06060" />
        </svg>
        Indicadores
      </button>
      <button aria-label="Más indicadores" className="flex h-full w-[12px] items-center justify-center border-x border-[#7893a2]">
        <Chevron />
      </button>
      <div className="flex items-center gap-[3px] pl-[5px]">
        <button aria-label="Información" className="flex size-2 items-center justify-center bg-white text-[8px] leading-2 text-[#8a9aa3]">
          i
        </button>
        <span className="mx-1 size-[5px] rounded-full bg-[#75838b]" />
        <span className="h-3 rounded-[2px] bg-[#f34b4e] px-0.5 leading-3 font-normal text-white">-0,88 %</span>
        <span>30 ene 2026</span>
        <span className="h-3 rounded-[3px] border border-[#3896c8] bg-[#5fbcec] px-px leading-[10px] font-normal">GBP/USD</span>
      </div>
      <div className="ml-auto flex h-full items-center">
        <button aria-label="Sincronizar" className="flex h-full w-[17px] items-center justify-center border-x border-[#7893a2]">
          <svg viewBox="0 0 12 12" className="size-3" fill="none" strokeWidth={2}>
            <path d="M2.500 7V5a3 3 0 013-3h2" stroke="#e84848" />
            <path d="M0 5.500h5L2.500 9z" fill="#e84848" />
            <path d="M9.500 5v2a3 3 0 01-3 3h-2" stroke="#18b828" />
            <path d="M7 6.500h5L9.500 3z" fill="#18b828" />
          </svg>
        </button>
        <div className="flex w-[38px] items-center justify-around">
          <button aria-label="Minimizar" className="flex">
            <svg viewBox="0 0 8 8" className="size-2" stroke="#6a8391" strokeWidth={1.500}><path d="M1 7h6" /></svg>
          </button>
          <button aria-label="Restaurar" className="flex">
            <svg viewBox="0 0 8 8" className="size-2" stroke="#6a8391" fill="none"><path d="M.5 3.500h4v4h-4zM2.500 3V.500h5v4H5" /></svg>
          </button>
          <button aria-label="Cerrar" className="flex">
            <svg viewBox="0 0 8 8" className="size-2" stroke="#6a8391" strokeWidth={1.500}><path d="M1 1l6 6M7 1L1 7" /></svg>
          </button>
        </div>
      </div>
    </header>
  );
}

/* ---------- drawing tools ---------- */

function Handle({ points }: { points: string }) {
  return (
    <>
      {parse(points).map(([x, y]) => (
        <path key={`${x} ${y}`} d={`M${x - 2} ${y}h4M${x} ${y - 2}v4`} stroke="#1a2ce0" strokeWidth={1.300} />
      ))}
    </>
  );
}

const lens = (x: number) => (
  <>
    <circle cx={x} cy={7} r={3.500} fill="#c5d8e2" stroke="#3c464c" strokeWidth={1.200} />
    <path d={`M${x + 2.500} 9.500l4 4`} stroke="#3c464c" strokeWidth={2} />
  </>
);

const bell = (
  <>
    <path d="M5 12c2-1 1.500-3 1.500-5 0-4 7-4 7 0 0 2-.5 4 1.500 5z" fill="#ffe81c" stroke="#8a7a10" strokeWidth={0.800} />
    <circle cx={10} cy={13.500} r={1.300} fill="#c8a810" />
  </>
);

const level = (color: string) => (
  <>
    <circle cx={9} cy={9} r={1.300} fill="none" stroke={color} />
    <path d="M10.500 9h8" stroke={color} strokeWidth={1.400} />
  </>
);

const bubble = (color: string) => (
  <>
    <ellipse cx={10} cy={9} rx={5} ry={3.500} fill={color} fillOpacity={0.250} stroke={color} strokeWidth={1.200} />
    <Handle points="5,13 16,5" />
  </>
);

const flat = (color: string) => <path d="M3 9h15" stroke={color} strokeWidth={1.500} />;
const slope = (color: string) => <path d="M3 16L18 2" stroke={color} strokeWidth={1.300} />;

const tiny = (t: string, x: number, y: number) => (
  <text x={x} y={y} fill="#1a2ce0" className="text-[7px] font-bold">{t}</text>
);

const TOOLS: [string, ReactNode][] = [
  ["Cursor", <path d="M7 3v10l2.500-2.500L11.500 15l1.500-1-2-4h3z" fill="#fff" stroke="#56656e" strokeWidth={0.800} />],
  ["Zoom", lens(9)],
  ["Zoom de zona", <>{lens(11)}<path d="M3 6h3M3 6v8h9" fill="none" stroke="#2a68d8" strokeDasharray="2 1" /></>],
  ["Alerta en línea", <>{bell}<path d="M4 4h8M12 3l2 3 3-4" fill="none" stroke="#1a2ce0" /><path d="M13 6v8l2-2 3 1z" fill="#fff" stroke="#68757d" strokeWidth={0.600} /></>],
  ["Alerta", <>{bell}<path d="M3 4l2 2M17 4l-2 2" stroke="#c8a810" /></>],
  ["Texto de línea", <><path d="M5 10l2-6 3 7h4" fill="none" stroke="#1a2c60" strokeWidth={1.300} /><path d="M9 7h9" stroke="#f08080" />{tiny("F", 14, 15)}</>],
  ["Fibonacci", <><path d="M7 7h11" stroke="#f09080" /><path d="M7 9h7" stroke="#1a2ce0" strokeDasharray="2 1" />{tiny("F", 14, 15)}</>],
  ["Rectángulo azul", <><path d="M5 6h11v6H5z" fill="none" stroke="#5c8ce8" strokeDasharray="2 1" /><Handle points="5,12 16,6" /></>],
  ["Rectángulo rojo", <><path d="M5 6h11v6H5z" fill="#d88a94" stroke="#f01818" strokeWidth={1.300} /><Handle points="5,12 16,6" /></>],
  ["Flecha", <><circle cx={6} cy={13} r={1.600} fill="none" stroke="#111" /><path d="M7.500 11.500L13 7" stroke="#111" strokeWidth={1.800} /><path d="M10 4h5.500v5.500z" fill="#111" /></>],
  ["Texto", <><rect x={5} y={4} width={10} height={10} rx={1} fill="#a8c8e8" stroke="#6a9ae8" /><path d="M7.500 6.500h5M10 6.500v6" stroke="#222" strokeWidth={1.600} /></>],
  ["Nota", <><circle cx={10} cy={8.500} r={5.500} fill="#b8dce0" stroke="#6a9ae8" /><path d="M8 13v3l3-3" fill="#6a9ae8" /><path d="M7.500 6.500h5M10 6.500v5" stroke="#128a28" strokeWidth={1.600} /></>],
  ["Segmento", <><circle cx={6} cy={12} r={1.600} fill="none" stroke="#222" /><circle cx={14.500} cy={6} r={1.600} fill="none" stroke="#222" /><path d="M7 11l6-4" stroke="#222" /></>],
  ["Nivel claro", level("#7cf08c")],
  ["Nivel verde", level("#2aa83a")],
  ["Nivel verde oscuro", level("#127a22")],
  ["Nivel rojo", level("#f01818")],
  ["Regla", <path d="M4 11.500l10-8 3 3-10 8zM7 9.500l1.500 1.500M9.500 7.500L11 9M12 5.500l1.500 1.500" fill="#bccad2" stroke="#5b6870" strokeWidth={0.900} />],
  ["Regresión", <><path d="M3 3h15M3 15h15" stroke="#20b040" strokeDasharray="2 1" /><path d="M3 13l4-5 3 3 4-6 4 4" fill="none" stroke="#8ca0d8" strokeWidth={1.300} /></>],
  ["Elipse roja", bubble("#f01828")],
  ["Elipse marrón", bubble("#8a5a2c")],
  ["Elipse verde", bubble("#128a28")],
  ["Elipse clara", bubble("#20d840")],
  ["Recta negra", slope("#2b353b")],
  ["Recta verde", slope("#20a838")],
  ["Recta roja", slope("#f01010")],
  ["Horizontal negra", flat("#2b353b")],
  ["Horizontal salmón", flat("#f08a80")],
  ["Horizontal lima", flat("#08e818")],
  ["Horizontal verde", flat("#087a18")],
  ["Horizontal roja", flat("#e81010")],
  ["Horizontal celeste", flat("#5a90f0")],
  ["Horizontal azul", flat("#0c0ca8")],
  ["Vertical", <path d="M10 2v15" stroke="#333e45" strokeWidth={1.400} />],
  ["Ángulo", <><path d="M15 4L3 14h14" fill="none" stroke="#f06a58" />{tiny("a°", 9, 12)}</>],
  ["Círculo", <><circle cx={10} cy={9} r={5.500} fill="none" stroke="#f08a50" strokeWidth={1.300} /><Handle points="10,9 14,5" /></>],
  ["Ondas 1-5", <><path d="M4 8l3 7 4-9 3 7 3-9" fill="none" stroke="#4a70f0" strokeDasharray="2 1" />{tiny("5", 14, 6)}{tiny("1", 3, 7)}{tiny("2", 7, 17)}</>],
  ["Ondas abc", <><path d="M4 4l9 10M6 12l6-9" stroke="#4a70f0" strokeDasharray="2 1" />{tiny("b", 13, 6)}{tiny("a", 3, 15)}{tiny("c", 13, 16)}</>],
  ["Aceptar", <path d="M4 9l3-2 2 3 6-7 2 2-8 10z" fill="#2cc040" stroke="#18862a" strokeWidth={0.800} />],
  ["Me gusta", <path d="M4 8h3v7H4zM8 8l3-5c2 0 2 2 1 4h4c2 0 1 8-1 8H8z" fill="#2cc040" stroke="#18862a" strokeWidth={0.800} />],
  ["Eliminar", <path d="M5 4l3-1 2.500 4L13 3l3 1-3 5 3 5-3 1-2.500-4L8 15l-3-1 3-5z" fill="#f00c0c" stroke="#b00808" strokeWidth={0.600} />],
];

function ToolRail() {
  return (
    <aside className="flex w-[23px] shrink-0 flex-col border-l-2 border-[#5f7a8a] bg-[#9ab6c4]">
      <button aria-label="Subir" className="flex h-[9px] shrink-0 items-center justify-center border-b border-[#7f9aa8]">
        <svg viewBox="0 0 8 5" className="h-[5px] w-2" fill="none" stroke="#4c606c"><path d="M1 4l3-2.500L7 4" /></svg>
      </button>
      <nav aria-label="Herramientas de dibujo" className="flex min-h-0 flex-1 flex-col">
        {TOOLS.map(([name, icon], i) => (
          <button
            key={name}
            aria-label={name}
            className={
              i === 0
                ? "mx-px flex min-h-0 flex-1 items-center justify-center rounded-[2px] border border-[#78909d] bg-[#8ba4b1]"
                : "flex min-h-0 flex-1 items-center justify-center"
            }
          >
            <svg viewBox="0 0 21 18" className="h-4 w-[19px] shrink-0">{icon}</svg>
          </button>
        ))}
      </nav>
      <button aria-label="Bajar" className="mt-[5px] flex h-[13px] shrink-0 items-center justify-center border-y border-[#7391a0] bg-[#b4cedb]">
        <Chevron />
      </button>
      <button aria-label="Plantillas" className="flex h-[22px] shrink-0 items-center justify-center">
        <svg viewBox="0 0 18 20" className="h-5 w-[18px]">
          <path d="M5 4h9v12H5z" fill="#eef2f4" stroke="#7a8890" />
          <path d="M7 9l2-2 2 3 2-2" fill="none" stroke="#e06060" />
          <circle cx="5" cy="5" r="3.500" fill="#15a02a" />
          <path d="M5 3v4M3 5h4" stroke="#fff" />
          <path d="M10 13l4 4M14 12a2 2 0 103 3" fill="none" stroke="#222" strokeWidth="1.500" />
        </svg>
      </button>
      <button aria-label="Más herramientas" className="flex h-[21px] shrink-0 items-center justify-center">
        <svg viewBox="0 0 14 8" className="h-2 w-3.5" fill="#222">
          <path d="M1 2h2v2H1zM5 2h2v2H5zM9 2h2v2H9zM9 5h4l-2 2z" />
        </svg>
      </button>
    </aside>
  );
}

/* ---------- bottom bar ---------- */

const VIEWS: [string, ReactNode][] = [
  ["Compartir", <><path d="M11 3L4 7l7 4" fill="none" stroke="#f2f6f8" strokeWidth={1.300} /><circle cx={11} cy={3} r={1.800} fill="#fff" /><circle cx={3.500} cy={7} r={1.800} fill="#fff" /><circle cx={10} cy={11} r={1.800} fill="#fff" /></>],
  ["Chat", <><path d="M1 2h9v6H4l-3 2z" fill="#7ab0e8" /><path d="M4 5h9v7l-2-1H4z" fill="#2c6ee0" /><path d="M6 8h1M8 8h1M10 8h1" stroke="#fff" /></>],
  ["Informe", <><path d="M2 1h10v12H2z" fill="#f5f7f8" stroke="#555" /><path d="M4 4h2M4 7h2M4 10h2" stroke="#d02020" strokeWidth={1.500} /><path d="M7 4h4M7 7h4M7 10h4" stroke="#222" /></>],
  ["Libro de órdenes", <><path d="M1 1h6v3H1zM1 5h8v3H1zM1 9h5v4H1z" fill="#18b830" /><path d="M7 1h5v3H7zM9 5h3v3H9zM6 9h7v4H6z" fill="#8a4038" /></>],
  ["Ventanas", <><path d="M1 1h9v6H1z" fill="#fff" stroke="#2c5ec0" /><path d="M4 6h9v6H4z" fill="#fff" stroke="#2c5ec0" strokeWidth={1.300} /><path d="M6 10l2-2 1 1 2-2" fill="none" stroke="#18a030" /></>],
];

function glass(sign: ReactNode) {
  return (
    <>
      <circle cx={6} cy={6} r={4} fill="#fff" stroke="#333" strokeWidth={1.200} />
      <path d="M9 9l4 4" stroke="#222" strokeWidth={2} />
      {sign}
    </>
  );
}

const ACTIONS: [string, ReactNode][] = [
  ["Deshacer", <path d="M4 2L1 5l4 3V6c4-1 6 1 5 5 3-5 0-8-5-7V2z" fill="#6c9cc8" />],
  ["Rehacer", <path d="M10 2l3 3-4 3V6C5 5 3 7 4 11c-3-5 0-8 5-7V2z" fill="#7aa8d0" />],
  ["Propiedades", <><path d="M8 1h4v11H8z" fill="#18b838" /><path d="M2 12l7-6M8 3a2.500 2.500 0 104 3" fill="none" stroke="#b02828" strokeWidth={2} /></>],
  ["Zoom ajustado", glass(<path d="M12 1v7M3 13h6" stroke="#1830e0" strokeWidth={1.400} />)],
  ["Alejar", glass(<path d="M4 6h4" stroke="#1830e0" strokeWidth={1.300} />)],
  ["Acercar", glass(<path d="M4 6h4M6 4v4" stroke="#1830e0" strokeWidth={1.300} />)],
  ["Más", <><path d="M1 3h13" stroke="#222" strokeDasharray="2 1" strokeWidth={1.500} /><path d="M7 5v5M5 9h4l-2 2z" stroke="#1a62c0" fill="#1a62c0" /></>],
];

function BottomBar() {
  return (
    <footer className="flex h-[15px] shrink-0 items-center border-t border-[#6f8998] bg-[#9fbac8]">
      <button aria-label="Dibujar" className="flex h-full w-[23px] items-center justify-center border-l-2 border-[#5f7a8a] bg-[#8ba4b1]">
        <svg viewBox="0 0 14 14" className="size-3.5">
          <path d="M1 3l4 8 3-6 5-3" fill="none" stroke="#d02828" />
          <path d="M1 10l4-6 4 7" fill="none" stroke="#18a030" />
          <path d="M12 1l1 1-7 10-2 1 1-2z" fill="#f0c828" stroke="#604810" strokeWidth={0.600} />
        </svg>
      </button>
      <div className="flex items-center gap-[3px] pl-px">
        {VIEWS.map(([name, icon]) => (
          <button key={name} aria-label={name} className="flex">
            <svg viewBox="0 0 14 14" className="size-3.5">{icon}</svg>
          </button>
        ))}
        <button aria-label="Contraer" className="flex">
          <svg viewBox="0 0 8 8" className="size-2" fill="none" stroke="#33444e"><path d="M3.500 1L1 4l2.500 3M7 1L4.500 4 7 7" /></svg>
        </button>
      </div>
      <div className="ml-1 flex h-[11px] flex-1 items-stretch border border-[#6f8998] bg-[#92aebc]">
        <button aria-label="Atrás" className="flex w-[9px] items-center justify-center border-r border-[#6f8998] bg-[#bdd5e0]">
          <svg viewBox="0 0 6 6" className="size-1.5" fill="none" stroke="#111" strokeWidth={1.300}><path d="M4 1L2 3l2 2" /></svg>
        </button>
        <div className="flex-1" />
        <div className="w-[90%] border-l border-[#6f8998] bg-linear-to-b from-[#b8d6e2] to-[#9dbfce]" />
        <button aria-label="Adelante" className="flex w-[9px] items-center justify-center border-l border-[#6f8998] bg-[#bdd5e0]">
          <svg viewBox="0 0 6 6" className="size-1.5" fill="none" stroke="#111" strokeWidth={1.300}><path d="M2 1l2 2-2 2" /></svg>
        </button>
      </div>
      <div className="flex items-center gap-1 pl-[5px]">
        {ACTIONS.map(([name, icon]) => (
          <button key={name} aria-label={name} className="flex">
            <svg viewBox="0 0 14 14" className="size-3.5">{icon}</svg>
          </button>
        ))}
      </div>
    </footer>
  );
}

export default function App() {
  return (
    <div className="flex h-screen flex-col overflow-hidden bg-white font-['Liberation_Sans',Arial,sans-serif] text-[8px] leading-[10px] font-bold text-[#111]">
      <TopBar />
      <div className="flex min-h-0 flex-1">
        <ToolRail />
        <main className="grid min-w-0 flex-1 grid-rows-[520fr_92fr_69fr_85fr_46fr_12fr]">
          <PriceChart />
          <TrainsChart />
          <WillyChart />
          <AwesomeChart />
          <StrengthChart />
          <TimeAxis />
        </main>
      </div>
      <BottomBar />
    </div>
  );
}
